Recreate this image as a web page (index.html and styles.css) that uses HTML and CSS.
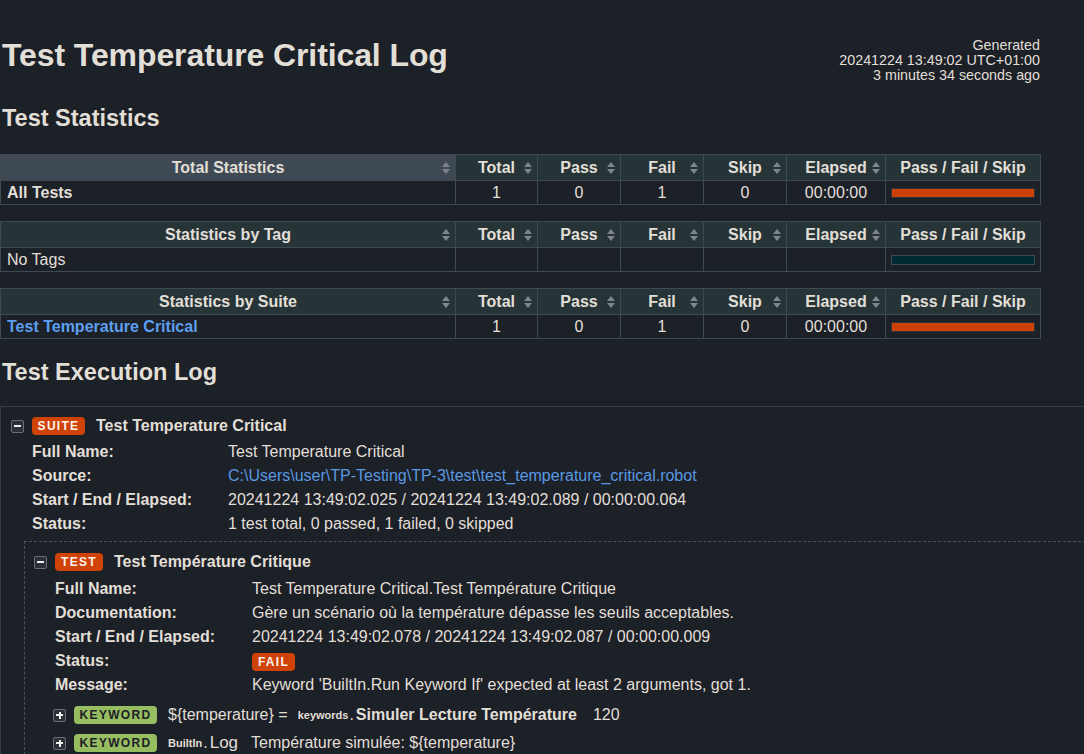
FILE: index.html
```html
<!DOCTYPE html>
<html lang="en">
<head>
<meta charset="utf-8">
<title>Test Temperature Critical Log</title>
<link rel="stylesheet" href="styles.css">
</head>
<body>
<div class="page">
  <header class="top">
    <h1 class="title">Test Temperature Critical Log</h1>
    <div class="generated">Generated<br>20241224 13:49:02 UTC+01:00<br>3 minutes 34 seconds ago</div>
  </header>

  <h2 class="section-title stats-title">Test Statistics</h2>

  <table class="stats">
    <colgroup><col class="c-name"><col class="c-num"><col class="c-num2"><col class="c-num2"><col class="c-num2"><col class="c-el"><col class="c-graph"></colgroup>
    <thead><tr>
      <th class="sorted">Total Statistics<span class="sort"></span></th>
      <th>Total<span class="sort"></span></th>
      <th>Pass<span class="sort"></span></th>
      <th>Fail<span class="sort"></span></th>
      <th>Skip<span class="sort"></span></th>
      <th>Elapsed<span class="sort"></span></th>
      <th>Pass / Fail / Skip</th>
    </tr></thead>
    <tbody><tr>
      <td class="name bold">All Tests</td>
      <td>1</td><td>0</td><td>1</td><td>0</td><td>00:00:00</td>
      <td class="graph"><div class="bar fail"></div></td>
    </tr></tbody>
  </table>

  <table class="stats">
    <colgroup><col class="c-name"><col class="c-num"><col class="c-num2"><col class="c-num2"><col class="c-num2"><col class="c-el"><col class="c-graph"></colgroup>
    <thead><tr>
      <th>Statistics by Tag<span class="sort"></span></th>
      <th>Total<span class="sort"></span></th>
      <th>Pass<span class="sort"></span></th>
      <th>Fail<span class="sort"></span></th>
      <th>Skip<span class="sort"></span></th>
      <th>Elapsed<span class="sort"></span></th>
      <th>Pass / Fail / Skip</th>
    </tr></thead>
    <tbody><tr>
      <td class="name">No Tags</td>
      <td></td><td></td><td></td><td></td><td></td>
      <td class="graph"><div class="bar empty"></div></td>
    </tr></tbody>
  </table>

  <table class="stats">
    <colgroup><col class="c-name"><col class="c-num"><col class="c-num2"><col class="c-num2"><col class="c-num2"><col class="c-el"><col class="c-graph"></colgroup>
    <thead><tr>
      <th>Statistics by Suite<span class="sort"></span></th>
      <th>Total<span class="sort"></span></th>
      <th>Pass<span class="sort"></span></th>
      <th>Fail<span class="sort"></span></th>
      <th>Skip<span class="sort"></span></th>
      <th>Elapsed<span class="sort"></span></th>
      <th>Pass / Fail / Skip</th>
    </tr></thead>
    <tbody><tr>
      <td class="name"><a class="link bold" href="#">Test Temperature Critical</a></td>
      <td>1</td><td>0</td><td>1</td><td>0</td><td>00:00:00</td>
      <td class="graph"><div class="bar fail"></div></td>
    </tr></tbody>
  </table>

  <h2 class="section-title log-title">Test Execution Log</h2>
</div>

<div class="suite">
  <div class="el-header">
    <span class="toggle minus"></span>
    <span class="badge fail-bg">SUITE</span>
    <span class="el-name">Test Temperature Critical</span>
  </div>
  <div class="meta">
    <div class="k">Full Name:</div><div class="v">Test Temperature Critical</div>
    <div class="k">Source:</div><div class="v"><a class="link src" href="#">C:\Users\user\TP-Testing\TP-3\test\test_temperature_critical.robot</a></div>
    <div class="k">Start / End / Elapsed:</div><div class="v">20241224 13:49:02.025 / 20241224 13:49:02.089 / 00:00:00.064</div>
    <div class="k">Status:</div><div class="v">1 test total, 0 passed, 1 failed, 0 skipped</div>
  </div>

  <div class="test">
    <div class="el-header">
      <span class="toggle minus"></span>
      <span class="badge fail-bg test-badge">TEST</span>
      <span class="el-name">Test Température Critique</span>
    </div>
    <div class="meta">
      <div class="k">Full Name:</div><div class="v">Test Temperature Critical.Test Température Critique</div>
      <div class="k">Documentation:</div><div class="v">Gère un scénario où la température dépasse les seuils acceptables.</div>
      <div class="k">Start / End / Elapsed:</div><div class="v">20241224 13:49:02.078 / 20241224 13:49:02.087 / 00:00:00.009</div>
      <div class="k">Status:</div><div class="v"><span class="badge fail-bg status">FAIL</span></div>
      <div class="k">Message:</div><div class="v">Keyword 'BuiltIn.Run Keyword If' expected at least 2 arguments, got 1.</div>
    </div>

    <div class="kw kw-first">
      <span class="toggle plus"></span>
      <span class="badge kw-badge">KEYWORD</span>
      <span class="kw-text">${temperature} =</span>
      <span class="parent">keywords</span><span class="dot">.</span><span class="kw-name">Simuler Lecture Température</span>
      <span class="arg">120</span>
    </div>
    <div class="kw">
      <span class="toggle plus"></span>
      <span class="badge kw-badge">KEYWORD</span>
      <span class="parent">BuiltIn</span><span class="dot">.</span><span class="kw-plain">Log</span>
      <span class="arg2">Température simulée: ${temperature}</span>
    </div>
  </div>
</div>
</body>
</html>
```

FILE: styles.css
```css
html, body {
  margin: 0;
  padding: 0;
  background: #1c2027;
  color: #e2dfd7;
  font-family: "Liberation Sans", Arial, sans-serif;
  font-size: 16px;
  overflow: hidden;
}

.page {
  width: 1040px;
}

.top {
  display: flex;
  justify-content: space-between;
  align-items: flex-start;
  padding-top: 37px;
}

.title {
  margin: 0 0 0 2px;
  font-size: 32px;
  line-height: 37px;
  font-weight: bold;
  letter-spacing: -0.1px;
}

.generated {
  text-align: right;
  font-size: 14.3px;
  line-height: 15px;
  margin-top: 1px;
  margin-bottom: -1px;
}

.section-title {
  margin: 0 0 0 2px;
  font-size: 23.5px;
  line-height: 27px;
  font-weight: bold;
}

.stats-title {
  margin-top: 23px;
  margin-bottom: 22px;
}

.log-title {
  margin-top: 20px;
  margin-bottom: 20px;
}

.stats {
  width: 1040px;
  table-layout: fixed;
  border-collapse: collapse;
  margin-bottom: 16px;
}

.stats:last-of-type {
  margin-bottom: 0;
}

.c-name { width: 455px; }
.c-num { width: 82px; }
.c-num2 { width: 83px; }
.c-el { width: 99px; }
.c-graph { width: 155px; }

.stats th {
  position: relative;
  background: #263438;
  border: 1px solid #3d4a50;
  padding: 2px 4px;
  line-height: 21px;
  font-weight: bold;
  text-align: center;
  white-space: nowrap;
}

.stats th.sorted {
  background: #3f4953;
}

.stats td {
  border: 1px solid #3d4a50;
  padding: 1px 4px;
  line-height: 21px;
  text-align: center;
  white-space: nowrap;
}

.stats td.name {
  text-align: left;
  padding-left: 6px;
}

.bold { font-weight: bold; }

.sort {
  position: absolute;
  right: 5px;
  top: 7px;
  width: 8px;
  height: 12px;
}

.sort::before,
.sort::after {
  content: "";
  position: absolute;
  left: 0;
  border-left: 4px solid transparent;
  border-right: 4px solid transparent;
}

.sort::before {
  top: 0;
  border-bottom: 5px solid #7f868b;
}

.sort::after {
  bottom: 0;
  border-top: 5px solid #7f868b;
}

.stats td.graph {
  padding: 0 5px 0 5px;
  vertical-align: middle;
}

.bar {
  height: 8px;
  border: 1px solid #2d3338;
}

.bar.fail { background: #ce4104; }
.bar.empty { background: #002a33; border-color: #3d4a50; }

.link {
  color: #5c9ff0;
  text-decoration: none;
}

.link.src { color: #5a98e2; }

/* execution log */
.suite {
  width: 1120px;
  border: 1px solid #363d45;
  padding: 9px 0 6px 10px;
}

.el-header {
  display: flex;
  align-items: center;
  height: 20px;
  line-height: 20px;
}

.toggle {
  position: relative;
  box-sizing: border-box;
  width: 13px;
  height: 13px;
  border: 1px solid #6a7076;
  border-radius: 2px;
  background: #2b3037;
  flex: none;
}

.toggle::before {
  content: "";
  position: absolute;
  left: 2px;
  top: 4.5px;
  width: 7px;
  height: 2px;
  background: #f0f0f0;
}

.toggle.plus::after {
  content: "";
  position: absolute;
  left: 4.5px;
  top: 2px;
  width: 2px;
  height: 7px;
  background: #f0f0f0;
}

.badge {
  display: inline-flex;
  align-items: center;
  justify-content: center;
  box-sizing: border-box;
  height: 18px;
  border-radius: 4px;
  font-size: 12px;
  font-weight: bold;
  letter-spacing: 1.3px;
  flex: none;
}

.fail-bg {
  background: #cf4307;
  color: #fbf3ee;
}

.el-header .toggle { margin-right: 8px; }

.el-header .badge {
  width: 53px;
  margin-right: 11px;
}

.el-header .test-badge { width: 48px; }

.el-name {
  font-weight: bold;
  white-space: nowrap;
}

.meta {
  display: grid;
  grid-template-columns: 196px 1fr;
  margin-left: 21px;
  margin-top: 4px;
  line-height: 24px;
}

.meta .k {
  font-weight: bold;
  white-space: nowrap;
}

.meta .v {
  white-space: nowrap;
}

.badge.status {
  width: 43px;
  margin-top: 4px;
}

.meta .v .status { display: flex; }

.test {
  margin: 5px 0 0 13px;
  border: 1px dashed #4b5158;
  border-right: none;
  padding: 10px 0 8px 9px;
}

.test .meta {
  grid-template-columns: 197px 1fr;
  margin-top: 5px;
}

.kw {
  display: flex;
  align-items: center;
  height: 26px;
  margin-left: 19px;
  margin-top: 2px;
  white-space: nowrap;
}

.kw.kw-first { margin-top: 5px; }

.kw .toggle { margin-right: 8px; }

.kw-badge {
  width: 83px;
  background: #97bd61;
  color: #1c2027;
  letter-spacing: 1.3px;
  margin-right: 11px;
}

.kw-text { margin-right: 10px; }

.parent {
  font-size: 11px;
  font-weight: bold;
}

.dot {
  margin: 0 2px 0 1px;
}

.kw-name {
  font-weight: bold;
}

.kw-plain {
  font-size: 17px;
}

.arg {
  margin-left: 16px;
}

.arg2 {
  margin-left: 13px;
}
```
